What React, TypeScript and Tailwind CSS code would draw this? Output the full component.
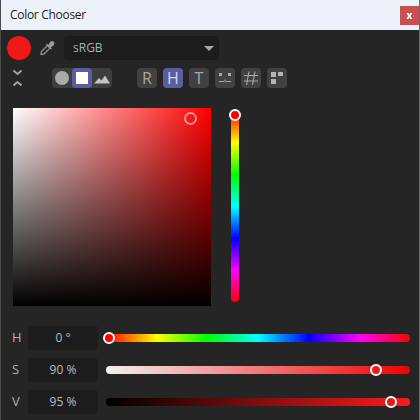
import React from "react";

const font = { fontFamily: '"Open Sans", "Noto Sans", sans-serif' };

const ToolButton = ({ active, children }: { active?: boolean; children: React.ReactNode }) => (
    <div className={`flex h-5 w-5 items-center justify-center rounded-[4px] text-[16px] leading-none ${active ? "bg-[#5a5ea0] text-[#d5d7ee]" : "bg-[#414141] text-[#a8a8a8]"}`}>
        {children}
    </div>
);

const Thumb = ({ left, fill }: { left: string; fill: string }) => (
    <div className={`absolute top-1/2 h-[12px] w-[12px] -translate-x-1/2 -translate-y-1/2 rounded-full border-2 border-white ${left} ${fill}`} />
);

const SliderRow = ({ label, value, track, thumb }: { label: string; value: string; track: string; thumb: React.ReactNode }) => (
    <div className="flex h-6 items-center">
        <span className="w-[27px] pb-[1px] pl-[11px] text-[13px] leading-none text-[#a5b2bf]">{label}</span>
        <div className="flex h-6 w-[70px] items-center justify-center rounded-[4px] bg-[#1c1c1c] text-[12px] text-[#b4bcc4]">{value}</div>
        <div className={`relative ml-2 h-2 w-[304px] rounded-full ${track}`}>{thumb}</div>
    </div>
);

export default function App() {
    return (
        <div style={font} className="flex h-[420px] w-[420px] flex-col overflow-hidden border-r border-l border-r-[#6b6b6b] border-l-[#4a4a4a] bg-[#252525]">
            <div className="flex h-[30px] shrink-0 items-center justify-between bg-[#edf2fa]">
                <span className="pl-[9px] text-[12px] tracking-[-0.3px] text-[#1c1c1c]">Color Chooser</span>
                <div className="flex h-[19px] w-[19px] items-center justify-center bg-[#c75050] text-[10px] font-bold leading-none text-white">x</div>
            </div>

            <div className="mt-[6px] flex items-center pl-[6px]">
                <div className="h-6 w-6 rounded-full bg-[#f21818]" />
                <svg className="ml-2 h-4 w-4" viewBox="0 0 16 16" fill="none">
                    <path d="M2 14.5 L2.5 11.5 L8.5 5.5 L11 8 L5 14 Z" stroke="#8f8f8f" strokeWidth="1.3" strokeLinejoin="round" />
                    <path d="M7.5 4 L12.5 9 M10 5 L12 2 Q13.5 1.2 14.6 2.4 Q15.2 3.6 14 5 L11.5 7 Z" stroke="#9a9a9a" strokeWidth="1.3" fill="#9a9a9a" />
                </svg>
                <div className="ml-[9px] flex h-6 w-[155px] items-center justify-between rounded-[4px] bg-[#1c1c1c] pl-[9px] pr-[4px] text-[12px] text-[#a9aeb3]">
                    <span>sRGB</span>
                    <div className="mr-[1px] h-0 w-0 border-x-[5px] border-t-[5px] border-x-transparent border-t-[#a8a8a8]" />
                </div>
            </div>

            <div className="mt-2 flex h-5 items-center">
                <svg className="ml-[12px] h-[18px] w-[9px]" viewBox="0 0 9 18" fill="none" stroke="#a0a0a0" strokeWidth="2">
                    <path d="M0.5 1.5 L4.5 5 L8.5 1.5" />
                    <path d="M0.5 16.5 L4.5 13 L8.5 16.5" />
                </svg>
                <div className="ml-[30px] flex h-5 w-[60px] items-center rounded-[4px] bg-[#3e3e3e]">
                    <div className="flex h-5 w-5 items-center justify-center">
                        <div className="h-[14px] w-[14px] rounded-full bg-[#ababab]" />
                    </div>
                    <div className="flex h-5 w-5 items-center justify-center rounded-[4px] bg-[#5a5ea0]">
                        <div className="h-3 w-3 bg-white" />
                    </div>
                    <svg className="h-5 w-5" viewBox="0 0 20 20" fill="#c4c4c4">
                        <path d="M2 15.5 L7 10 L9.5 12.5 L13 7.5 L18 15.5 Z" />
                    </svg>
                </div>
                <div className="ml-[25px] flex gap-[6px]">
                    <ToolButton>R</ToolButton>
                    <ToolButton active>H</ToolButton>
                    <ToolButton>T</ToolButton>
                    <ToolButton>
                        <svg className="h-5 w-5" viewBox="0 0 20 20" fill="#a8a8a8">
                            <rect x="4" y="5" width="3" height="3" />
                            <rect x="13" y="5" width="3" height="3" />
                            <rect x="4" y="13" width="5" height="1" />
                            <rect x="11" y="13" width="5" height="1" />
                            <rect x="9.5" y="11.5" width="1" height="3" />
                        </svg>
                    </ToolButton>
                    <ToolButton>
                        <svg className="h-5 w-5" viewBox="0 0 20 20" stroke="#a8a8a8" strokeWidth="1.1" fill="none">
                            <path d="M8 3.5 L5.5 17 M14 3.5 L11.5 17 M3 7.5 H17 M3 13 H17" />
                        </svg>
                    </ToolButton>
                    <ToolButton>
                        <svg className="h-5 w-5" viewBox="0 0 20 20" fill="#b4b4b4">
                            <rect x="4" y="4" width="5" height="5" />
                            <rect x="11" y="4" width="5" height="4" />
                            <rect x="4" y="11" width="5" height="5" />
                        </svg>
                    </ToolButton>
                </div>
            </div>

            <div className="mt-5 flex pl-3">
                <div className="relative h-[198px] w-[198px] bg-[linear-gradient(to_bottom,transparent,#000),linear-gradient(to_right,#fff,#f00)]">
                    <div className="absolute left-[171px] top-[4px] h-[13px] w-[13px] rounded-full border-2 border-white/50" />
                </div>
                <div className="relative ml-[20px] mt-[3px] h-[191px] w-2 rounded-full bg-[linear-gradient(to_bottom,#f00,#ff0,#0f0,#0ff,#00f,#f0f,#f00)]">
                    <div className="absolute left-1/2 top-[-2px] h-[12px] w-[12px] -translate-x-1/2 rounded-full border-2 border-white bg-[#f00]" />
                </div>
            </div>

            <div className="mt-5 flex flex-col gap-2">
                <SliderRow
                    label="H"
                    value="0 °"
                    track="bg-[linear-gradient(to_right,#f00,#ff0,#0f0,#0ff,#00f,#f0f,#f00)]"
                    thumb={<Thumb left="left-[3px]" fill="bg-[#f00]" />}
                />
                <SliderRow
                    label="S"
                    value="90 %"
                    track="bg-[linear-gradient(to_right,#f2f2f2,#f20000)]"
                    thumb={<Thumb left="left-[270px]" fill="bg-[#f01c1c]" />}
                />
                <SliderRow
                    label="V"
                    value="95 %"
                    track="bg-[linear-gradient(to_right,#000,#ff1a1a)]"
                    thumb={<Thumb left="left-[285px]" fill="bg-[#e61a1a]" />}
                />
            </div>
        </div>
    );
}
